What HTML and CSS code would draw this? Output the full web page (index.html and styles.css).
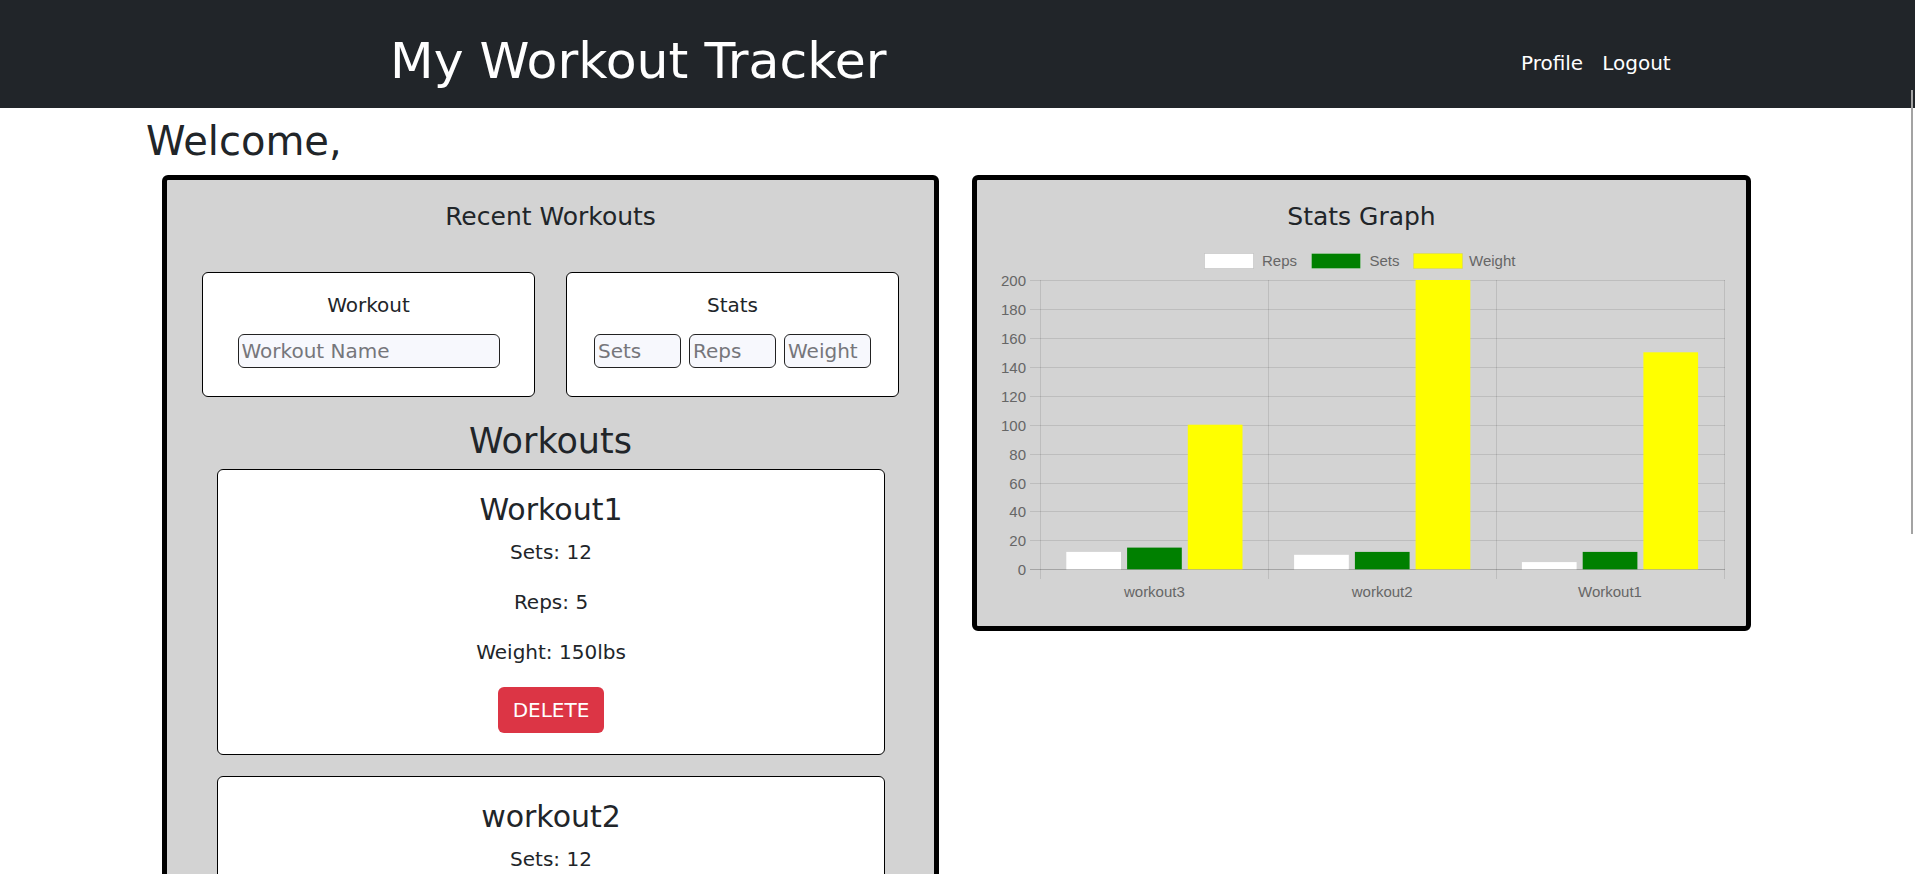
FILE: index.html
```html
<!DOCTYPE html>
<html lang="en">
<head>
<meta charset="utf-8">
<title>My Workout Tracker</title>
<link rel="stylesheet" href="styles.css">
</head>
<body>
<header class="topbar">
  <div class="brand"><h1 class="brand-title">My Workout Tracker</h1></div>
  <nav class="nav"><a href="#">Profile</a><a href="#">Logout</a></nav>
</header>
<main class="page">
  <h2 class="welcome">Welcome,</h2>
  <div class="panels">
    <section class="panel">
      <h5 class="panel-title">Recent Workouts</h5>
      <div class="form-row">
        <div class="form-box">
          <h6 class="box-title">Workout</h6>
          <div class="fields"><input class="field field-wide" type="text" placeholder="Workout Name"></div>
        </div>
        <div class="form-box">
          <h6 class="box-title">Stats</h6>
          <div class="fields">
            <input class="field field-sm" type="text" placeholder="Sets">
            <input class="field field-sm" type="text" placeholder="Reps">
            <input class="field field-sm" type="text" placeholder="Weight">
          </div>
        </div>
      </div>
      <h3 class="list-title">Workouts</h3>
      <div class="card">
        <h4 class="card-title">Workout1</h4>
        <p>Sets: 12</p>
        <p>Reps: 5</p>
        <p class="last">Weight: 150lbs</p>
        <div class="actions"><button class="btn-delete" type="button">DELETE</button></div>
      </div>
      <div class="card">
        <h4 class="card-title">workout2</h4>
        <p>Sets: 12</p>
        <p>Reps: 10</p>
        <p class="last">Weight: 200lbs</p>
        <div class="actions"><button class="btn-delete" type="button">DELETE</button></div>
      </div>
      <div class="card">
        <h4 class="card-title">workout3</h4>
        <p>Sets: 15</p>
        <p>Reps: 12</p>
        <p class="last">Weight: 100lbs</p>
        <div class="actions"><button class="btn-delete" type="button">DELETE</button></div>
      </div>
    </section>
    <section class="panel chart-panel">
      <h5 class="panel-title chart-title">Stats Graph</h5>
      <svg class="chart" width="769" height="394" viewBox="977 232 769 394" xmlns="http://www.w3.org/2000/svg">
        <g font-family="Liberation Sans, Arial, sans-serif" font-size="15" fill="#666">
          <rect x="1204.5" y="253.5" width="49" height="15" fill="#ffffff" stroke="rgba(0,0,0,0.1)"/>
          <text x="1262" y="266">Reps</text>
          <rect x="1311.5" y="253.5" width="49" height="15" fill="#008000" stroke="rgba(255,255,255,0.25)"/>
          <text x="1369.5" y="266">Sets</text>
          <rect x="1413.5" y="253.5" width="49" height="15" fill="#ffff00" stroke="rgba(0,0,0,0.05)"/>
          <text x="1469" y="266">Weight</text>
        </g>
        <g stroke="rgba(0,0,0,0.1)" stroke-width="1">
          <line x1="1030" y1="280.5" x2="1725" y2="280.5"/>
          <line x1="1030" y1="309.5" x2="1725" y2="309.5"/>
          <line x1="1030" y1="338.5" x2="1725" y2="338.5"/>
          <line x1="1030" y1="367.5" x2="1725" y2="367.5"/>
          <line x1="1030" y1="396.5" x2="1725" y2="396.5"/>
          <line x1="1030" y1="425.5" x2="1725" y2="425.5"/>
          <line x1="1030" y1="454.5" x2="1725" y2="454.5"/>
          <line x1="1030" y1="483.5" x2="1725" y2="483.5"/>
          <line x1="1030" y1="511.5" x2="1725" y2="511.5"/>
          <line x1="1030" y1="540.5" x2="1725" y2="540.5"/>
          <line x1="1040.5" y1="280" x2="1040.5" y2="579"/>
          <line x1="1268.5" y1="280" x2="1268.5" y2="579"/>
          <line x1="1496.5" y1="280" x2="1496.5" y2="579"/>
          <line x1="1724.5" y1="280" x2="1724.5" y2="579"/>
        </g>
        <line x1="1030" y1="569.5" x2="1725" y2="569.5" stroke="rgba(0,0,0,0.22)" stroke-width="1"/>
        <g font-family="Liberation Sans, Arial, sans-serif" font-size="15" fill="#666" text-anchor="end">
          <text x="1026" y="285.5">200</text>
          <text x="1026" y="314.5">180</text>
          <text x="1026" y="343.5">160</text>
          <text x="1026" y="372.5">140</text>
          <text x="1026" y="401.5">120</text>
          <text x="1026" y="430.5">100</text>
          <text x="1026" y="459.5">80</text>
          <text x="1026" y="488.5">60</text>
          <text x="1026" y="516.5">40</text>
          <text x="1026" y="545.5">20</text>
          <text x="1026" y="574.5">0</text>
        </g>
        <g>
          <rect x="1066.3" y="551.9" width="54.7" height="17.4" fill="#ffffff"/>
          <rect x="1127.1" y="547.6" width="54.7" height="21.7" fill="#008000"/>
          <rect x="1187.8" y="424.7" width="54.7" height="144.6" fill="#ffff00"/>
          <rect x="1294.1" y="554.8" width="54.7" height="14.5" fill="#ffffff"/>
          <rect x="1354.9" y="551.9" width="54.7" height="17.4" fill="#008000"/>
          <rect x="1415.6" y="280" width="54.7" height="289.3" fill="#ffff00"/>
          <rect x="1521.9" y="562.1" width="54.7" height="7.2" fill="#ffffff"/>
          <rect x="1582.7" y="551.9" width="54.7" height="17.4" fill="#008000"/>
          <rect x="1643.4" y="352.3" width="54.7" height="217" fill="#ffff00"/>
        </g>
        <g font-family="Liberation Sans, Arial, sans-serif" font-size="15" fill="#666" text-anchor="middle">
          <text x="1154.4" y="597">workout3</text>
          <text x="1382.2" y="597">workout2</text>
          <text x="1610" y="597">Workout1</text>
        </g>
      </svg>
    </section>
  </div>
</main>
<div class="scroll-thumb"></div>
</body>
</html>
```
FILE: styles.css
```css
* {
  box-sizing: border-box;
}

html {
  scrollbar-width: none;
}

html::-webkit-scrollbar {
  display: none;
}

body {
  margin: 0;
  font-family: "DejaVu Sans", "Verdana", sans-serif;
  color: #212529;
  background: #ffffff;
}

.topbar {
  display: grid;
  grid-template-columns: 2fr 1fr;
  height: 108px;
  background: #212529;
  color: #ffffff;
}

.brand-title {
  margin: 0;
  padding-top: 31px;
  font-size: 50.5px;
  font-weight: 400;
  line-height: 60px;
  text-align: center;
}

.nav {
  display: flex;
  justify-content: center;
  align-items: flex-start;
  gap: 19px;
  padding-top: 48px;
  font-size: 20px;
  line-height: 30px;
}

.nav a {
  color: #ffffff;
  text-decoration: none;
}

.welcome {
  margin: 9px 0 10px 146px;
  font-size: 40px;
  font-weight: 400;
  line-height: 48px;
}

.panels {
  display: grid;
  grid-template-columns: 1fr 1fr;
  gap: 33px;
  padding: 0 164px 0 162px;
  align-items: start;
}

.panel {
  background: #d3d3d3;
  border: 5px solid #000000;
  border-radius: 6px;
  padding-top: 22px;
}

.panel-title {
  margin: 0 0 40px;
  font-size: 25px;
  font-weight: 400;
  line-height: 30px;
  text-align: center;
}

.chart-title {
  margin-bottom: 0;
}

.chart {
  display: block;
}

.form-row {
  display: grid;
  grid-template-columns: 1fr 1fr;
  gap: 31px;
  padding: 0 35px;
}

.form-box {
  background: #ffffff;
  border: 1px solid #000000;
  border-radius: 6px;
  padding: 20px 0 28px;
  text-align: center;
}

.box-title {
  margin: 0 0 17px;
  font-size: 20px;
  font-weight: 400;
  line-height: 24px;
}

.fields {
  display: flex;
  justify-content: center;
  gap: 8px;
}

.field {
  height: 34px;
  margin: 0;
  border: 1px solid #222222;
  border-radius: 6px;
  background: #f7f8fd;
  font-family: "DejaVu Sans", sans-serif;
  font-size: 20px;
  padding: 0 3px;
  color: #212529;
}

.field::placeholder {
  color: #76767b;
}

.field-wide {
  width: 262px;
}

.field-sm {
  width: 87px;
}

.list-title {
  margin: 23px 0 7px;
  font-size: 35px;
  font-weight: 400;
  line-height: 42px;
  text-align: center;
}

.card {
  margin: 0 49px 21px 50px;
  background: #ffffff;
  border: 1px solid #000000;
  border-radius: 6px;
  padding: 22px 0 21px;
  text-align: center;
}

.card-title {
  margin: 0 0 9px;
  font-size: 30px;
  font-weight: 400;
  line-height: 36px;
}

.card p {
  margin: 0 0 20px;
  font-size: 20px;
  line-height: 30px;
}

.card p.last {
  margin-bottom: 20px;
}

.actions {
  display: flex;
  justify-content: center;
}

.btn-delete {
  background: #dc3545;
  color: #ffffff;
  border: 0;
  border-radius: 6px;
  font-family: "DejaVu Sans", sans-serif;
  font-size: 20px;
  line-height: 30px;
  padding: 8px 15px;
}

.scroll-thumb {
  position: fixed;
  right: 2px;
  top: 90px;
  width: 2px;
  height: 444px;
  background: #a3a3a3;
}
```
